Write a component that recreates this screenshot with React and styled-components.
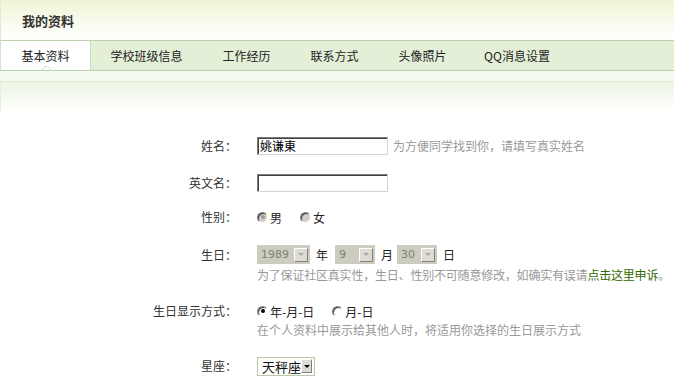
import React from 'react';
import styled, { createGlobalStyle } from 'styled-components';

const GlobalStyle = createGlobalStyle`
  html, body { margin: 0; padding: 0; background: #fff; }
  body {
    font-family: "Noto Sans CJK SC", "DejaVu Sans", sans-serif;
    font-size: 12px;
    color: #333;
  }
`;

const Page = styled.div`
  width: 674px;
  height: 391px;
  overflow: hidden;
  background: #fff;
`;

const Header = styled.div`
  height: 40px;
  border-left: 1px solid #e0ead6;
  background: linear-gradient(#eef5d6, #fbfdf3 70%, #fff);
  display: flex;
  align-items: center;
  padding-left: 21px;
`;

const Title = styled.h1`
  margin: 0;
  font-size: 13px;
  font-weight: bold;
  color: #333;
  line-height: 1;
`;

const TabBar = styled.div`
  height: 29px;
  display: flex;
  background: #e4efd8;
  border-top: 1px solid #bccfae;
  border-bottom: 1px solid #bccfae;
  border-left: 1px solid #d4e2c8;
`;

const Tab = styled.div`
  position: relative;
  width: ${p => p.w}px;
  display: flex;
  align-items: center;
  justify-content: center;
  color: #222;
  background: ${p => (p.active ? '#fff' : 'transparent')};
  border-right: ${p => (p.active ? '1px solid #cddcc0' : 'none')};
  box-sizing: border-box;
`;

const Notch = styled.svg`
  position: absolute;
  left: 39px;
  bottom: -1px;
`;

const Strip = styled.div`
  height: 10px;
  background: #f5fbf1;
  border-bottom: 1px solid #d9e8cd;
`;

const Banner = styled.div`
  height: 30px;
  border-left: 1px solid #e4eedb;
  background: linear-gradient(#edf5e2, #fff);
`;

const Form = styled.div`
  display: flex;
  flex-direction: column;
  padding-top: 25px;
`;

const Row = styled.div`
  display: grid;
  grid-template-columns: 237px 1fr;
  column-gap: 20px;
  margin-top: ${p => p.mt || 0}px;
`;

const Label = styled.div`
  text-align: right;
  line-height: ${p => p.lh || 18}px;
  color: #333;
  white-space: nowrap;
`;

const Field = styled.div`
  display: flex;
  flex-direction: column;
`;

const Line = styled.div`
  display: flex;
  align-items: center;
  height: ${p => p.h || 18}px;
  white-space: nowrap;
`;

const TextInput = styled.div`
  width: 131px;
  height: 18px;
  box-sizing: border-box;
  border-top: 1px solid #7b7b7b;
  border-left: 1px solid #7b7b7b;
  border-right: 1px solid #d6d3ce;
  border-bottom: 1px solid #d6d3ce;
  box-shadow: inset 1px 1px 0 #404040;
  padding: 0 2px;
  font-size: 12px;
  line-height: 16px;
  color: #000;
`;

const Hint = styled.span`
  color: #999;
  margin-left: ${p => p.ml || 0}px;
  letter-spacing: ${p => (p.tight ? '-0.2px' : 'normal')};
  line-height: 18px;
`;

const Link = styled.a`
  color: #2f6b00;
  text-decoration: none;
`;

const RadioWrap = styled.label`
  display: inline-flex;
  align-items: center;
  margin-right: ${p => p.mr || 0}px;
  color: #222;
`;

const RadioCircle = styled.span`
  width: 11px;
  height: 11px;
  margin-right: 2px;
  border-radius: 50%;
  box-sizing: border-box;
  border: 1px solid;
  border-color: #7f7f7f #fff #fff #7f7f7f;
  background: ${p => (p.disabled ? '#d4d0c8' : '#fff')};
  box-shadow: inset 1px 1px 0 #404040;
  display: flex;
  align-items: center;
  justify-content: center;
  &::after {
    content: '';
    width: 4px;
    height: 4px;
    border-radius: 50%;
    background: ${p => (p.checked ? (p.disabled ? '#9a9a9a' : '#000') : 'transparent')};
  }
`;

const Select = styled.div`
  width: ${p => p.w}px;
  height: 19px;
  box-sizing: border-box;
  display: flex;
  align-items: center;
  justify-content: space-between;
  padding: 0 2px 0 4px;
  background: ${p => (p.disabled ? '#cdcdbf' : '#fff')};
  border: ${p => (p.disabled ? 'none' : '1px solid #b5c9a7')};
  color: ${p => (p.disabled ? '#808078' : '#111')};
  font-family: ${p => (p.disabled ? '"DejaVu Sans", sans-serif' : 'inherit')};
  font-size: ${p => (p.disabled ? 11 : 13)}px;
`;

const ArrowBtn = styled.span`
  width: 14px;
  height: 14px;
  box-sizing: border-box;
  background: #dedbd4;
  border: 1px solid;
  border-color: #fff #808080 #808080 #fff;
  display: flex;
  align-items: center;
  justify-content: center;
  &::after {
    content: '';
    border-left: 3px solid transparent;
    border-right: 3px solid transparent;
    border-top: 3px solid ${p => (p.disabled ? '#a8a8a0' : '#000')};
  }
`;

const Unit = styled.span`
  margin: 0 ${p => p.mr || 0}px 0 6px;
  color: #222;
`;

const Radio = ({ checked, disabled, children, mr }) => (
  <RadioWrap mr={mr}>
    <RadioCircle checked={checked} disabled={disabled} />
    {children}
  </RadioWrap>
);

const tabs = [
  { t: '基本资料', w: 90, active: true },
  { t: '学校班级信息', w: 111 },
  { t: '工作经历', w: 89 },
  { t: '联系方式', w: 87 },
  { t: '头像照片', w: 89 },
  { t: 'QQ消息设置', w: 100 },
];

export default function App() {
  return (
    <Page>
      <GlobalStyle />
      <Header>
        <Title>我的资料</Title>
      </Header>
      <TabBar>
        {tabs.map(tab => (
          <Tab key={tab.t} w={tab.w} active={tab.active}>
            {tab.t}
            {tab.active && (
              <Notch width="13" height="5" viewBox="0 0 13 5">
                <polyline points="0,5 6.5,0 13,5" fill="none" stroke="#d2dec8" />
              </Notch>
            )}
          </Tab>
        ))}
      </TabBar>
      <Strip />
      <Banner />
      <Form>
        <Row>
          <Label>姓名：</Label>
          <Line>
            <TextInput>姚谦東</TextInput>
            <Hint ml={5}>为方便同学找到你，请填写真实姓名</Hint>
          </Line>
        </Row>
        <Row mt={19}>
          <Label>英文名：</Label>
          <Line>
            <TextInput />
          </Line>
        </Row>
        <Row mt={16}>
          <Label>性别：</Label>
          <Line>
            <Radio checked disabled mr={18}>男</Radio>
            <Radio disabled>女</Radio>
          </Line>
        </Row>
        <Row mt={19}>
          <Label lh={19}>生日：</Label>
          <Field>
            <Line h={19}>
              <Select w={53} disabled>1989<ArrowBtn disabled /></Select>
              <Unit mr={7}>年</Unit>
              <Select w={40} disabled>9<ArrowBtn disabled /></Select>
              <Unit mr={4}>月</Unit>
              <Select w={40} disabled>30<ArrowBtn disabled /></Select>
              <Unit>日</Unit>
            </Line>
            <Line h={22}>
              <Hint tight>为了保证社区真实性，生日、性别不可随意修改，如确实有误请<Link href="#">点击这里申诉</Link>。</Hint>
            </Line>
          </Field>
        </Row>
        <Row mt={16}>
          <Label>生日显示方式：</Label>
          <Field>
            <Line>
              <Radio checked mr={18}>年-月-日</Radio>
              <Radio>月-日</Radio>
            </Line>
            <Line h={20}>
              <Hint>在个人资料中展示给其他人时，将适用你选择的生日展示方式</Hint>
            </Line>
          </Field>
        </Row>
        <Row mt={16}>
          <Label lh={20}>星座：</Label>
          <Line h={20}>
            <Select w={58}>天秤座<ArrowBtn /></Select>
          </Line>
        </Row>
      </Form>
    </Page>
  );
}
